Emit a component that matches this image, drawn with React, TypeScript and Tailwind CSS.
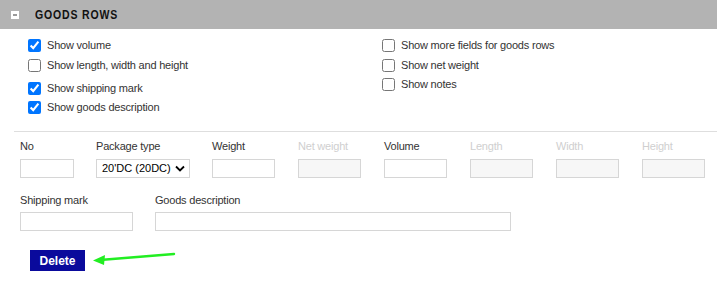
import React from "react"

const font = { fontFamily: '"Liberation Sans", Arial, sans-serif' }

function Check({ checked, label, className = "" }: { checked?: boolean; label: string; className?: string }) {
  return (
    <label className={`flex h-[20px] items-center gap-[6px] text-[11px] tracking-[-0.2px] text-[#333] ${className}`}>
      <input type="checkbox" defaultChecked={checked} className="m-0 h-[13px] w-[13px]" />
      <span>{label}</span>
    </label>
  )
}

function Field({
  label,
  width,
  colWidth,
  disabled,
  top = "mt-[3px]",
  children,
}: {
  label: string
  width: string
  colWidth: string
  disabled?: boolean
  top?: string
  children?: React.ReactNode
}) {
  return (
    <div className={`flex shrink-0 flex-col ${colWidth}`}>
      <span className={`h-[20px] text-[11px] leading-[20px] tracking-[-0.2px] ${disabled ? "text-[#cfcfcf]" : "text-[#333]"}`}>
        {label}
      </span>
      {children ?? (
        <input
          disabled={disabled}
          className={`${top} h-[19px] border border-[#d6d6d6] ${width} ${disabled ? "bg-[#f7f7f7]" : "bg-white"}`}
        />
      )}
    </div>
  )
}

export default function App() {
  return (
    <div className="h-[281px] w-[717px] overflow-hidden bg-white" style={font}>
      {/* Section header */}
      <div className="flex h-[29px] items-center bg-[#b3b3b3]">
        <div className="ml-[11px] flex h-[8px] w-[8px] items-center justify-center bg-white">
          <div className="h-[2px] w-[4px] bg-[#9a9a9a]" />
        </div>
        <h2 className="ml-[16px] origin-left scale-x-[0.81] whitespace-nowrap text-[13px] font-bold tracking-[1px] text-[#111]">
          GOODS ROWS
        </h2>
      </div>

      {/* Options */}
      <div className="flex pl-[28px] pt-[6px]">
        <div className="flex w-[354px] flex-col">
          <Check checked label="Show volume" />
          <Check label="Show length, width and height" />
          <Check checked label="Show shipping mark" className="mt-[3px]" />
          <Check checked label="Show goods description" className="-mt-[1px]" />
        </div>
        <div className="flex flex-col">
          <Check label="Show more fields for goods rows" />
          <Check label="Show net weight" />
          <Check label="Show notes" className="-mt-[1px]" />
        </div>
      </div>

      <div className="ml-[14px] mt-[14px] h-px bg-[#dedede]" />

      {/* Goods row */}
      <div className="flex pl-[20px] pt-[4px]">
        <Field label="No" width="w-[54px]" colWidth="w-[76px]" />
        <Field label="Package type" width="w-[94px]" colWidth="w-[116px]">
          <div className="mt-[3px] flex h-[19px] w-[94px] items-center justify-between border border-[#d6d6d6] pl-[5px] pr-[4px] text-[11px] text-black">
            <span>20'DC (20DC)</span>
            <svg width="10" height="7" viewBox="0 0 10 7">
              <path d="M1 1.5 L5 5.5 L9 1.5" fill="none" stroke="#000" strokeWidth="1.8" />
            </svg>
          </div>
        </Field>
        <Field label="Weight" width="w-[63px]" colWidth="w-[86px]" />
        <Field label="Net weight" width="w-[63px]" colWidth="w-[86px]" disabled />
        <Field label="Volume" width="w-[63px]" colWidth="w-[86px]" />
        <Field label="Length" width="w-[63px]" colWidth="w-[86px]" disabled />
        <Field label="Width" width="w-[63px]" colWidth="w-[86px]" disabled />
        <Field label="Height" width="w-[63px]" colWidth="w-[75px]" disabled />
      </div>

      <div className="flex pl-[20px] pt-[12px]">
        <Field label="Shipping mark" width="w-[113px]" colWidth="w-[135px]" top="mt-[2px]" />
        <Field label="Goods description" width="w-[356px]" colWidth="w-[356px]" top="mt-[2px]" />
      </div>

      {/* Actions */}
      <div className="relative flex pl-[30px] pt-[19px]">
        <button className="h-[21px] w-[55px] bg-[#0a0a9c] text-[12px] font-bold text-white">Delete</button>
        <svg className="absolute left-[90px] top-[19px]" width="90" height="18" viewBox="0 0 90 18">
          <path d="M10 10 L84 4" stroke="#22ee22" strokeWidth="2.5" strokeLinecap="round" />
          <path d="M3 10.5 L15 5 L14 15 Z" fill="#22ee22" />
        </svg>
      </div>
    </div>
  )
}
